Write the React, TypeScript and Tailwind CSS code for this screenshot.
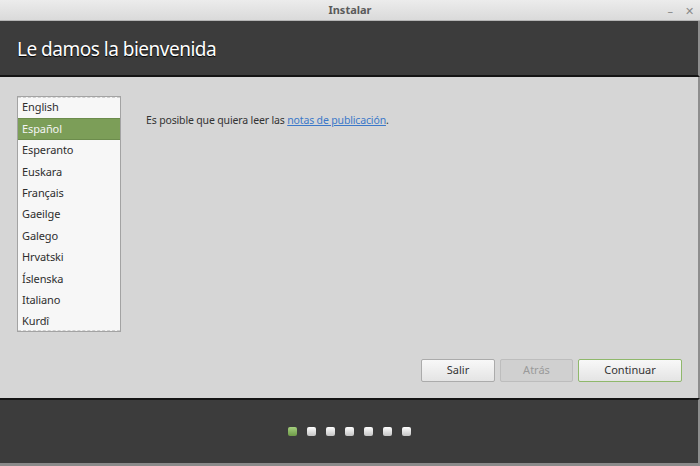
const languages = [
  'English',
  'Español',
  'Esperanto',
  'Euskara',
  'Français',
  'Gaeilge',
  'Galego',
  'Hrvatski',
  'Íslenska',
  'Italiano',
  'Kurdî',
];

const App = () => {
  return (
    <div className="w-[700px] h-[466px] flex flex-col bg-[#d6d6d6] overflow-hidden font-['Noto_Sans',sans-serif]">
      {/* Title bar */}
      <div className="h-[21px] shrink-0 flex items-center relative bg-gradient-to-b from-[#ececec] to-[#dadada] border-b border-[#b5b5b5]">
        <div className="flex-1 text-center text-[11px] font-bold text-[#5a5a5a]">Instalar</div>
        <div className="absolute right-[6px] top-0 h-full flex items-center gap-[12px] text-[#8a8a8a] text-[11px]">
          <span className="leading-none">–</span>
          <span className="leading-none">✕</span>
        </div>
      </div>

      {/* Header */}
      <div className="h-[56px] shrink-0 bg-[#3c3c3c] border-b-2 border-[#141414] flex items-center pl-[17px] pt-[3px] border-r-2 border-r-[#8e8e8e]">
        <h1 className="text-[19px] tracking-[-0.5px] text-white [text-shadow:0_1px_1px_#000]">Le damos la bienvenida</h1>
      </div>

      {/* Content */}
      <div className="flex-1 flex flex-col pl-[17px] pr-[16px] pt-[19px] pb-[16px] border-r-2 border-[#8e8e8e]">
        <div className="flex flex-1">
          <div className="relative w-[104px] h-[236px] bg-[#f7f7f7] border border-[#a3a3a3] flex flex-col">
            {languages.map((lang) => (
              <div
                key={lang}
                className={
                  lang === 'Español'
                    ? 'h-[21.4px] shrink-0 flex items-center pl-[4px] text-[11px] tracking-[-0.1px] text-[#f4f4f4] bg-[#7c9e58] border-y border-[#6c8c4c]'
                    : 'h-[21.4px] shrink-0 flex items-center pl-[4px] text-[11px] tracking-[-0.1px] text-[#2e2e2e]'
                }
              >
                {lang}
              </div>
            ))}
            <div className="absolute left-0 right-0 top-0 border-t border-dashed border-[#cfcfcf]" />
            <div className="absolute left-0 right-0 bottom-0 border-t border-dashed border-[#cfcfcf]" />
          </div>
          <p className="ml-[25px] mt-[17px] text-[10.5px] tracking-[-0.15px] text-[#333333]">
            Es posible que quiera leer las{' '}
            <a className="text-[#3b78c9] underline">notas de publicación</a>.
          </p>
        </div>

        <div className="flex justify-end gap-[5px]">
          <button className="w-[74px] h-[23px] rounded-[2px] border border-[#ababab] bg-gradient-to-b from-[#f8f8f8] to-[#e4e4e4] text-[11px] text-[#333333]">
            Salir
          </button>
          <button className="w-[73px] h-[23px] rounded-[2px] border border-[#bdbdbd] bg-[#d0d0d0] text-[11px] text-[#9a9a9a]">
            Atrás
          </button>
          <button className="w-[104px] h-[23px] rounded-[2px] border border-[#8fb86b] bg-gradient-to-b from-[#f8f8f8] to-[#e4e4e4] text-[11px] text-[#333333]">
            Continuar
          </button>
        </div>
      </div>

      {/* Footer */}
      <div className="h-[68px] shrink-0 bg-[#3c3c3c] border-t-2 border-[#141414] border-b-[3px] border-b-[#8a8a8a] flex items-center justify-center gap-[10px] pb-[1px] border-r-2 border-r-[#8e8e8e]">
        <div className="w-[9px] h-[9px] rounded-[2px] bg-gradient-to-b from-[#a5d07e] to-[#6e9a48]" />
        {[1, 2, 3, 4, 5, 6].map((i) => (
          <div key={i} className="w-[9px] h-[9px] rounded-[2px] bg-gradient-to-b from-[#ffffff] to-[#c4c4c4]" />
        ))}
      </div>
    </div>
  );
};

export default App;
